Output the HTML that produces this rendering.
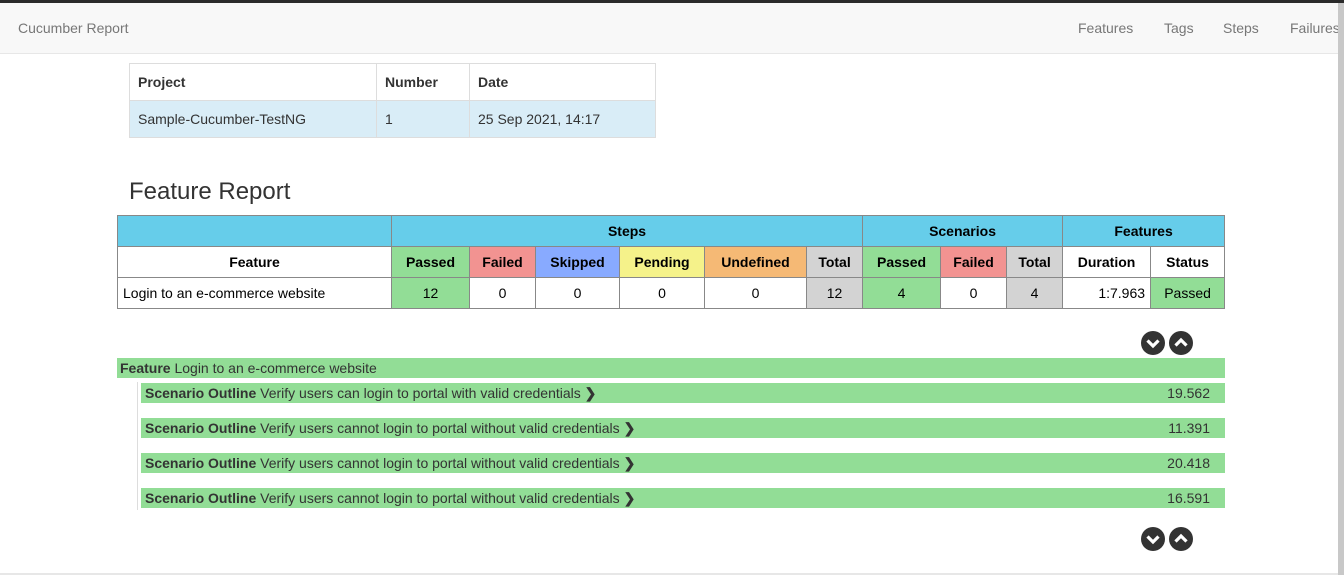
<!DOCTYPE html>
<html><head><meta charset="utf-8"><style>
*{box-sizing:border-box;margin:0;padding:0}
body{width:1344px;height:575px;overflow:hidden;background:#fff;font-family:"Liberation Sans",Arial,sans-serif;font-size:14px;color:#333;position:relative}
.top{position:absolute;left:0;top:0;width:1344px;height:3px;background:#2b2b2b}
.nav{position:absolute;left:0;top:3px;width:1338px;height:51px;background:#f8f8f8;border-bottom:1px solid #e7e7e7}
.nav span{position:absolute;top:17px;color:#777;font-size:14px}
.sb{position:absolute;right:0;top:3px;width:6px;height:572px;background:#c8c8c8}
table{border-collapse:collapse;table-layout:fixed;position:absolute}
.p td{border:1px solid #ddd;padding:0 8px;height:37px}
.p tr.h td{font-weight:bold;color:#333}
.p tr.b td{background:#d9edf7}
.m td{border:1px solid #888;height:31px;text-align:center;color:#000;font-size:14px}
.m tr.h td{font-weight:bold}
.bl{background:#66cdea}.ps{background:#92dd96}.fl{background:#f29391}.sk{background:#88aaff}.pn{background:#f5f28a}.un{background:#f5b975}.tt{background:#d3d3d3}
.bar{position:absolute;background:#92dd96;height:20px;line-height:20px;font-size:14px;color:#333}
.vl{position:absolute;left:137px;width:1px;background:#ddd}
.ic{position:absolute;width:24px;height:24px}
</style></head><body>
<div class="top"></div>
<div class="nav"><span style="left:18px">Cucumber Report</span><span style="left:1078px">Features</span><span style="left:1164px">Tags</span><span style="left:1223px">Steps</span><span style="left:1290px">Failures</span></div>
<div class="sb"></div>
<table class="p" style="left:129px;top:63px;width:526px">
<colgroup><col style="width:247px"><col style="width:93px"><col style="width:186px"></colgroup>
<tr class="h"><td>Project</td><td>Number</td><td>Date</td></tr>
<tr class="b"><td>Sample-Cucumber-TestNG</td><td>1</td><td>25 Sep 2021, 14:17</td></tr>
</table>
<div style="position:absolute;left:129px;top:178px;font-size:24px;color:#333">Feature Report</div>
<table class="m" style="left:117px;top:215px;width:1107px">
<colgroup><col style="width:274px"><col style="width:78px"><col style="width:66px"><col style="width:84px"><col style="width:85px"><col style="width:102px"><col style="width:56px"><col style="width:78px"><col style="width:66px"><col style="width:56px"><col style="width:88px"><col style="width:74px"></colgroup>
<tr class="h"><td class="bl"></td><td class="bl" colspan="6">Steps</td><td class="bl" colspan="3">Scenarios</td><td class="bl" colspan="2">Features</td></tr>
<tr class="h"><td>Feature</td><td class="ps">Passed</td><td class="fl">Failed</td><td class="sk">Skipped</td><td class="pn">Pending</td><td class="un">Undefined</td><td class="tt">Total</td><td class="ps">Passed</td><td class="fl">Failed</td><td class="tt">Total</td><td>Duration</td><td>Status</td></tr>
<tr><td style="text-align:left;padding-left:5px">Login to an e-commerce website</td><td class="ps">12</td><td>0</td><td>0</td><td>0</td><td>0</td><td class="tt">12</td><td class="ps">4</td><td>0</td><td class="tt">4</td><td style="text-align:right;padding-right:5px">1:7.963</td><td class="ps">Passed</td></tr>
</table>
<svg class="ic" style="left:1141px;top:331px" viewBox="0 0 24 24"><circle cx="12" cy="12" r="12" fill="#333"/><path d="M6.5 9.5L12 15L17.5 9.5" stroke="#fff" stroke-width="3.2" fill="none"/></svg>
<svg class="ic" style="left:1169px;top:331px" viewBox="0 0 24 24"><circle cx="12" cy="12" r="12" fill="#333"/><path d="M6.5 14.5L12 9L17.5 14.5" stroke="#fff" stroke-width="3.2" fill="none"/></svg>
<div class="bar" style="left:117px;top:358px;width:1108px;padding-left:3px"><b>Feature</b> Login to an e-commerce website</div>
<div class="vl" style="top:382px;height:128px"></div>
<div class="bar" style="left:141px;top:383px;width:1084px;padding-left:4px"><b>Scenario Outline</b> Verify users can login to portal with valid credentials <b>&#x276F;</b><span style="position:absolute;right:15px">19.562</span></div>
<div class="bar" style="left:141px;top:418px;width:1084px;padding-left:4px"><b>Scenario Outline</b> Verify users cannot login to portal without valid credentials <b>&#x276F;</b><span style="position:absolute;right:15px">11.391</span></div>
<div class="bar" style="left:141px;top:453px;width:1084px;padding-left:4px"><b>Scenario Outline</b> Verify users cannot login to portal without valid credentials <b>&#x276F;</b><span style="position:absolute;right:15px">20.418</span></div>
<div class="bar" style="left:141px;top:488px;width:1084px;padding-left:4px"><b>Scenario Outline</b> Verify users cannot login to portal without valid credentials <b>&#x276F;</b><span style="position:absolute;right:15px">16.591</span></div>
<svg class="ic" style="left:1141px;top:527px" viewBox="0 0 24 24"><circle cx="12" cy="12" r="12" fill="#333"/><path d="M6.5 9.5L12 15L17.5 9.5" stroke="#fff" stroke-width="3.2" fill="none"/></svg>
<svg class="ic" style="left:1169px;top:527px" viewBox="0 0 24 24"><circle cx="12" cy="12" r="12" fill="#333"/><path d="M6.5 14.5L12 9L17.5 14.5" stroke="#fff" stroke-width="3.2" fill="none"/></svg>
<div style="position:absolute;left:0;top:573px;width:1338px;height:2px;background:#e7e7e7"></div>
</body></html>
